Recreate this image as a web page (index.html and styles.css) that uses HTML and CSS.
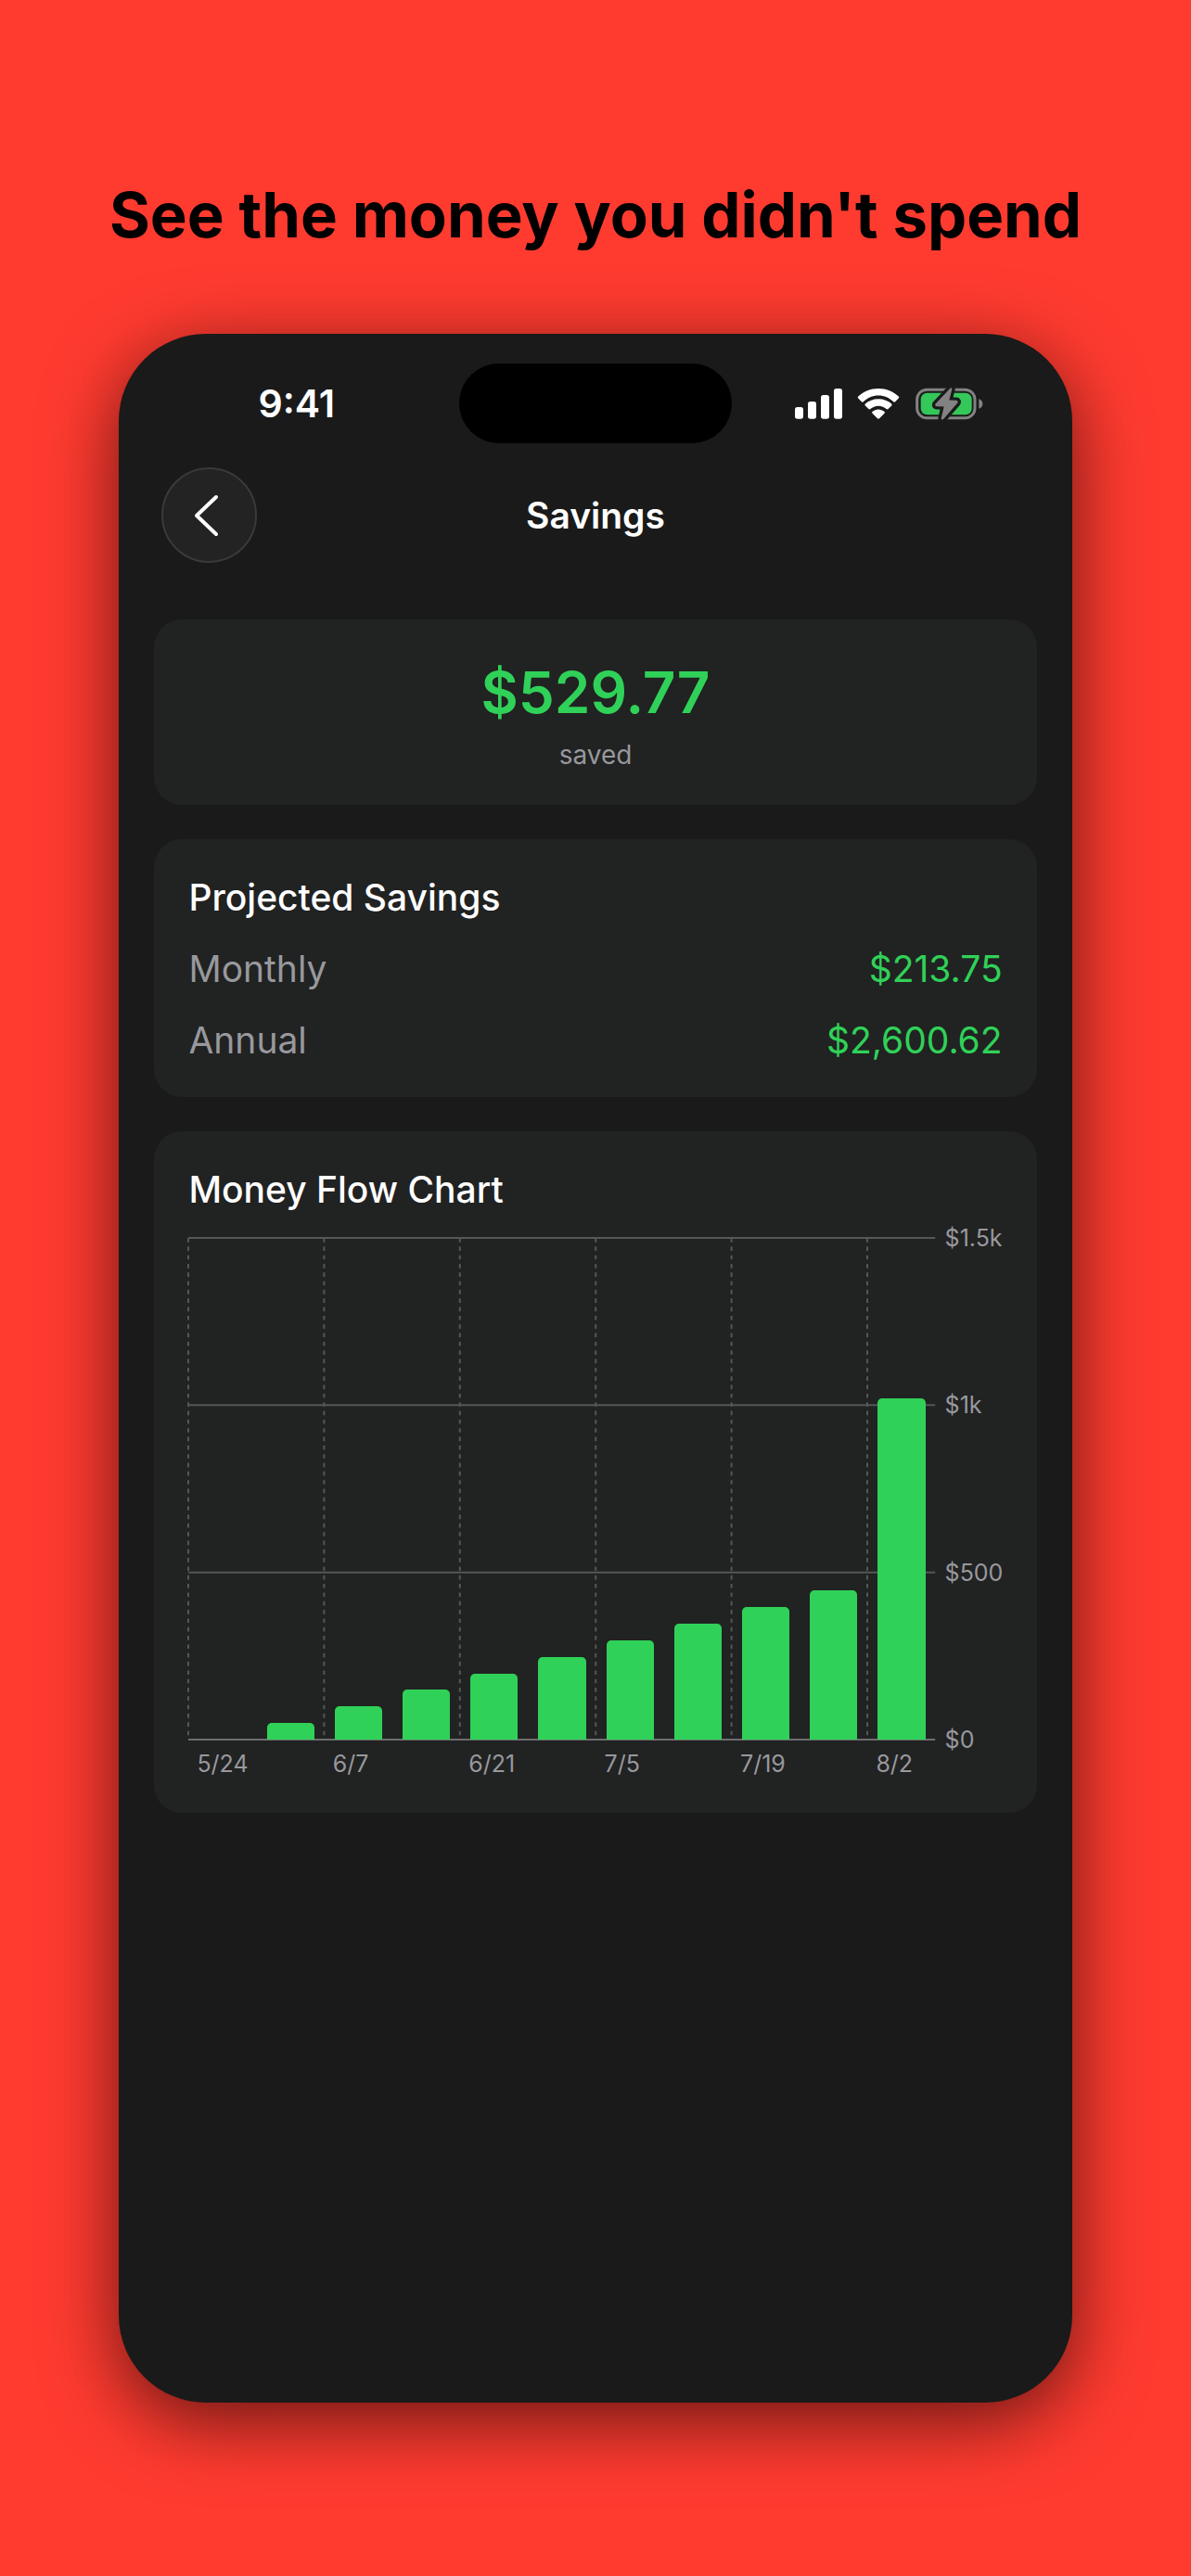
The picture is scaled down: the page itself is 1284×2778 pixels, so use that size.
FILE: index.html
```html
<!DOCTYPE html>
<html lang="en">
<head>
    <meta charset="UTF-8">
    <meta name="viewport" content="width=device-width, initial-scale=1.0">
    <title>Savings</title>
    <link rel="stylesheet" href="styles.css">
</head>
<body>
    <h1 class="headline">See the money you didn't spend</h1>

    <div class="phone">
        <div class="status-bar">
            <span class="time">9:41</span>
            <div class="island"></div>
            <div class="status-icons">
                <svg class="signal" viewBox="0 0 153 99" aria-hidden="true">
                    <rect x="0" y="60" width="27" height="38" rx="8"/>
                    <rect x="42" y="42" width="27" height="56" rx="8"/>
                    <rect x="84" y="21" width="27" height="77" rx="8"/>
                    <rect x="126" y="0" width="27" height="98" rx="8"/>
                </svg>
                <svg class="wifi" viewBox="0 0 136 100" aria-hidden="true">
                    <path d="M68 0C94 0 117 10 134 26Q137 29 134 32L123 43Q120 46 117 43C104 31 87 23 68 23S32 31 19 43Q16 46 13 43L2 32Q-1 29 2 26C19 10 42 0 68 0Z"/>
                    <path d="M68 34C85 34 100 40 111 50Q114 53 111 56L100 67Q97 70 94 67C87 61 78 57 68 57S49 61 42 67Q39 70 36 67L25 56Q22 53 25 50C36 40 51 34 68 34Z"/>
                    <path d="M68 68C76 68 82 71 87 75Q91 78 87 82L71 98Q68 101 65 98L49 82Q45 78 49 75C54 71 60 68 68 68Z"/>
                </svg>
                <svg class="battery" viewBox="0 0 222 110" aria-hidden="true">
                    <rect x="8" y="9" width="187" height="92" rx="32" fill="none" stroke="#828282" stroke-width="9"/>
                    <path d="M208 39Q220 43 220 55T208 71Z" fill="#828282"/>
                    <rect x="20" y="20" width="165" height="70" rx="20" fill="#34c759"/>
                    <path d="M115 5L67 56Q65 63 72 63L95 64L86 102Q87 109 94 104L139 52Q142 45 135 44L112 43L121 8Q120 1 115 5Z" fill="#828282" stroke="#1a1a1a" stroke-width="20" stroke-linejoin="round" paint-order="stroke"/>
                </svg>
            </div>
        </div>

        <div class="nav-bar">
            <button class="back-button" type="button" aria-label="Back">
                <svg viewBox="0 0 28 46" aria-hidden="true">
                    <path d="M25 3L4 23L25 43"/>
                </svg>
            </button>
            <h2 class="nav-title">Savings</h2>
        </div>

        <main class="cards">
            <section class="card total">
                <p class="amount">$529.77</p>
                <p class="caption">saved</p>
            </section>

            <section class="card projected">
                <h3>Projected Savings</h3>
                <div class="row">
                    <span class="label">Monthly</span>
                    <span class="value">$213.75</span>
                </div>
                <div class="row">
                    <span class="label">Annual</span>
                    <span class="value">$2,600.62</span>
                </div>
            </section>

            <section class="card">
                <h3>Money Flow Chart</h3>
                <div class="chart">
                    <div class="plot">
                        <svg class="grid" aria-hidden="true">
                            <g class="dashed">
                                <line x1="0" y1="0" x2="0" y2="100%" pathLength="464"/>
                                <line x1="18.18%" y1="0" x2="18.18%" y2="100%" pathLength="464"/>
                                <line x1="36.36%" y1="0" x2="36.36%" y2="100%" pathLength="464"/>
                                <line x1="54.55%" y1="0" x2="54.55%" y2="100%" pathLength="464"/>
                                <line x1="72.73%" y1="0" x2="72.73%" y2="100%" pathLength="464"/>
                                <line x1="90.91%" y1="0" x2="90.91%" y2="100%" pathLength="464"/>
                            </g>
                            <line x1="0" y1="0" x2="100%" y2="0"/>
                            <line x1="0" y1="33.33%" x2="100%" y2="33.33%"/>
                            <line x1="0" y1="66.67%" x2="100%" y2="66.67%"/>
                            <line class="axis" x1="0" y1="100%" x2="100%" y2="100%"/>
                        </svg>
                        <div class="bars">
                            <div class="bar" style="height: 0%"></div>
                            <div class="bar" style="height: 3.3%"></div>
                            <div class="bar" style="height: 6.6%"></div>
                            <div class="bar" style="height: 9.9%"></div>
                            <div class="bar" style="height: 13.2%"></div>
                            <div class="bar" style="height: 16.5%"></div>
                            <div class="bar" style="height: 19.8%"></div>
                            <div class="bar" style="height: 23.1%"></div>
                            <div class="bar" style="height: 26.4%"></div>
                            <div class="bar" style="height: 29.8%"></div>
                            <div class="bar" style="height: 68%"></div>
                        </div>
                    </div>
                    <div class="y-axis">
                        <span>$1.5k</span>
                        <span>$1k</span>
                        <span>$500</span>
                        <span>$0</span>
                    </div>
                    <div class="x-axis">
                        <span>5/24</span>
                        <span>6/7</span>
                        <span>6/21</span>
                        <span>7/5</span>
                        <span>7/19</span>
                        <span>8/2</span>
                    </div>
                </div>
            </section>
        </main>
    </div>
</body>
</html>
```
FILE: styles.css
```css
* {
    margin: 0;
    padding: 0;
    box-sizing: border-box;
}

body {
    font-family: Inter, "Liberation Sans", sans-serif;
    background: #ff3b30;
    min-height: 100vh;
    display: flex;
    flex-direction: column;
    align-items: center;
    padding: 190px 0 187px;
}

.headline {
    font-size: 67px;
    line-height: 84px;
    font-weight: 700;
    color: #000;
    text-align: center;
    margin-bottom: 86px;
}

.phone {
    flex: 1;
    width: 80%;
    background: #1a1a1a;
    border-radius: 94px;
    box-shadow: 0 20px 80px rgba(0, 0, 0, 0.6);
    padding: 32px 0 38px;
    color: #fff;
}

/* Status bar */
.status-bar {
    display: grid;
    grid-template-columns: 1fr 294px 1fr;
    align-items: center;
}

.time {
    font-size: 41px;
    font-weight: 600;
    margin-left: 150px;
}

.island {
    height: 86px;
    border-radius: 43px;
    background: #000;
}

.status-icons {
    display: flex;
    align-items: center;
    justify-content: flex-end;
    gap: 16px;
    margin-right: 96px;
}

.status-icons svg {
    fill: #fff;
}

.signal {
    width: 51px;
    height: 33px;
}

.wifi {
    width: 46px;
    height: 33px;
}

.battery {
    width: 74px;
    height: 37px;
}

/* Navigation */
.nav-bar {
    display: grid;
    grid-template-columns: 1fr auto 1fr;
    align-items: center;
    padding: 0 46px;
    margin-top: 26px;
}

.back-button {
    display: flex;
    align-items: center;
    justify-content: center;
    width: 103px;
    height: 103px;
    padding-right: 8px;
    border: 2px solid #3a3a3a;
    border-radius: 50%;
    background: #232323;
    cursor: pointer;
}

.back-button svg {
    width: 28px;
    height: 46px;
    fill: none;
    stroke: #fff;
    stroke-width: 4;
    stroke-linecap: round;
    stroke-linejoin: round;
}

.nav-title {
    font-size: 39px;
    font-weight: 600;
}

/* Cards */
.cards {
    display: flex;
    flex-direction: column;
    gap: 37px;
    padding: 0 38px;
    margin-top: 61px;
}

.card {
    background: #212222;
    border-radius: 30px;
    padding: 38px 37px 36px;
}

.card h3 {
    font-size: 39px;
    line-height: 50px;
    font-weight: 500;
}

.total {
    text-align: center;
}

.amount {
    font-size: 62px;
    line-height: 82px;
    font-weight: 600;
    color: #30d158;
    margin-bottom: 8px;
}

.caption {
    font-size: 28px;
    line-height: 36px;
    color: #98989d;
}

.projected {
    display: flex;
    flex-direction: column;
    gap: 27px;
}

.row {
    display: flex;
    justify-content: space-between;
    font-size: 39px;
    line-height: 50px;
}

.label {
    color: #98989d;
}

.value {
    color: #30d158;
}

/* Chart */
.chart {
    display: grid;
    grid-template-columns: 1fr 72px;
    margin-top: 27px;
    font-size: 25px;
    line-height: 34px;
    color: #98989d;
}

.plot {
    display: grid;
    height: 541px;
}

.grid,
.bars {
    grid-area: 1 / 1;
    width: 100%;
    height: 100%;
}

.grid {
    overflow: visible;
    stroke: #555656;
    stroke-width: 2;
}

.dashed {
    stroke-dasharray: 4 4;
}

.grid .axis {
    stroke: #6d6d6f;
}

.bars {
    display: grid;
    grid-template-columns: repeat(11, 1fr);
    align-items: end;
    justify-items: center;
}

.bar {
    width: 70%;
    background: #30d158;
    border-radius: 5px 5px 0 0;
}

.y-axis {
    display: flex;
    flex-direction: column;
    justify-content: space-between;
    margin: -17px 0;
    padding-left: 10px;
}

.x-axis {
    display: grid;
    /* one column per two weeks, the last one holds a single bar */
    grid-template-columns: repeat(5, 2fr) 1fr;
    padding-top: 9px;
}

.x-axis span {
    padding-left: 9px;
}
```
